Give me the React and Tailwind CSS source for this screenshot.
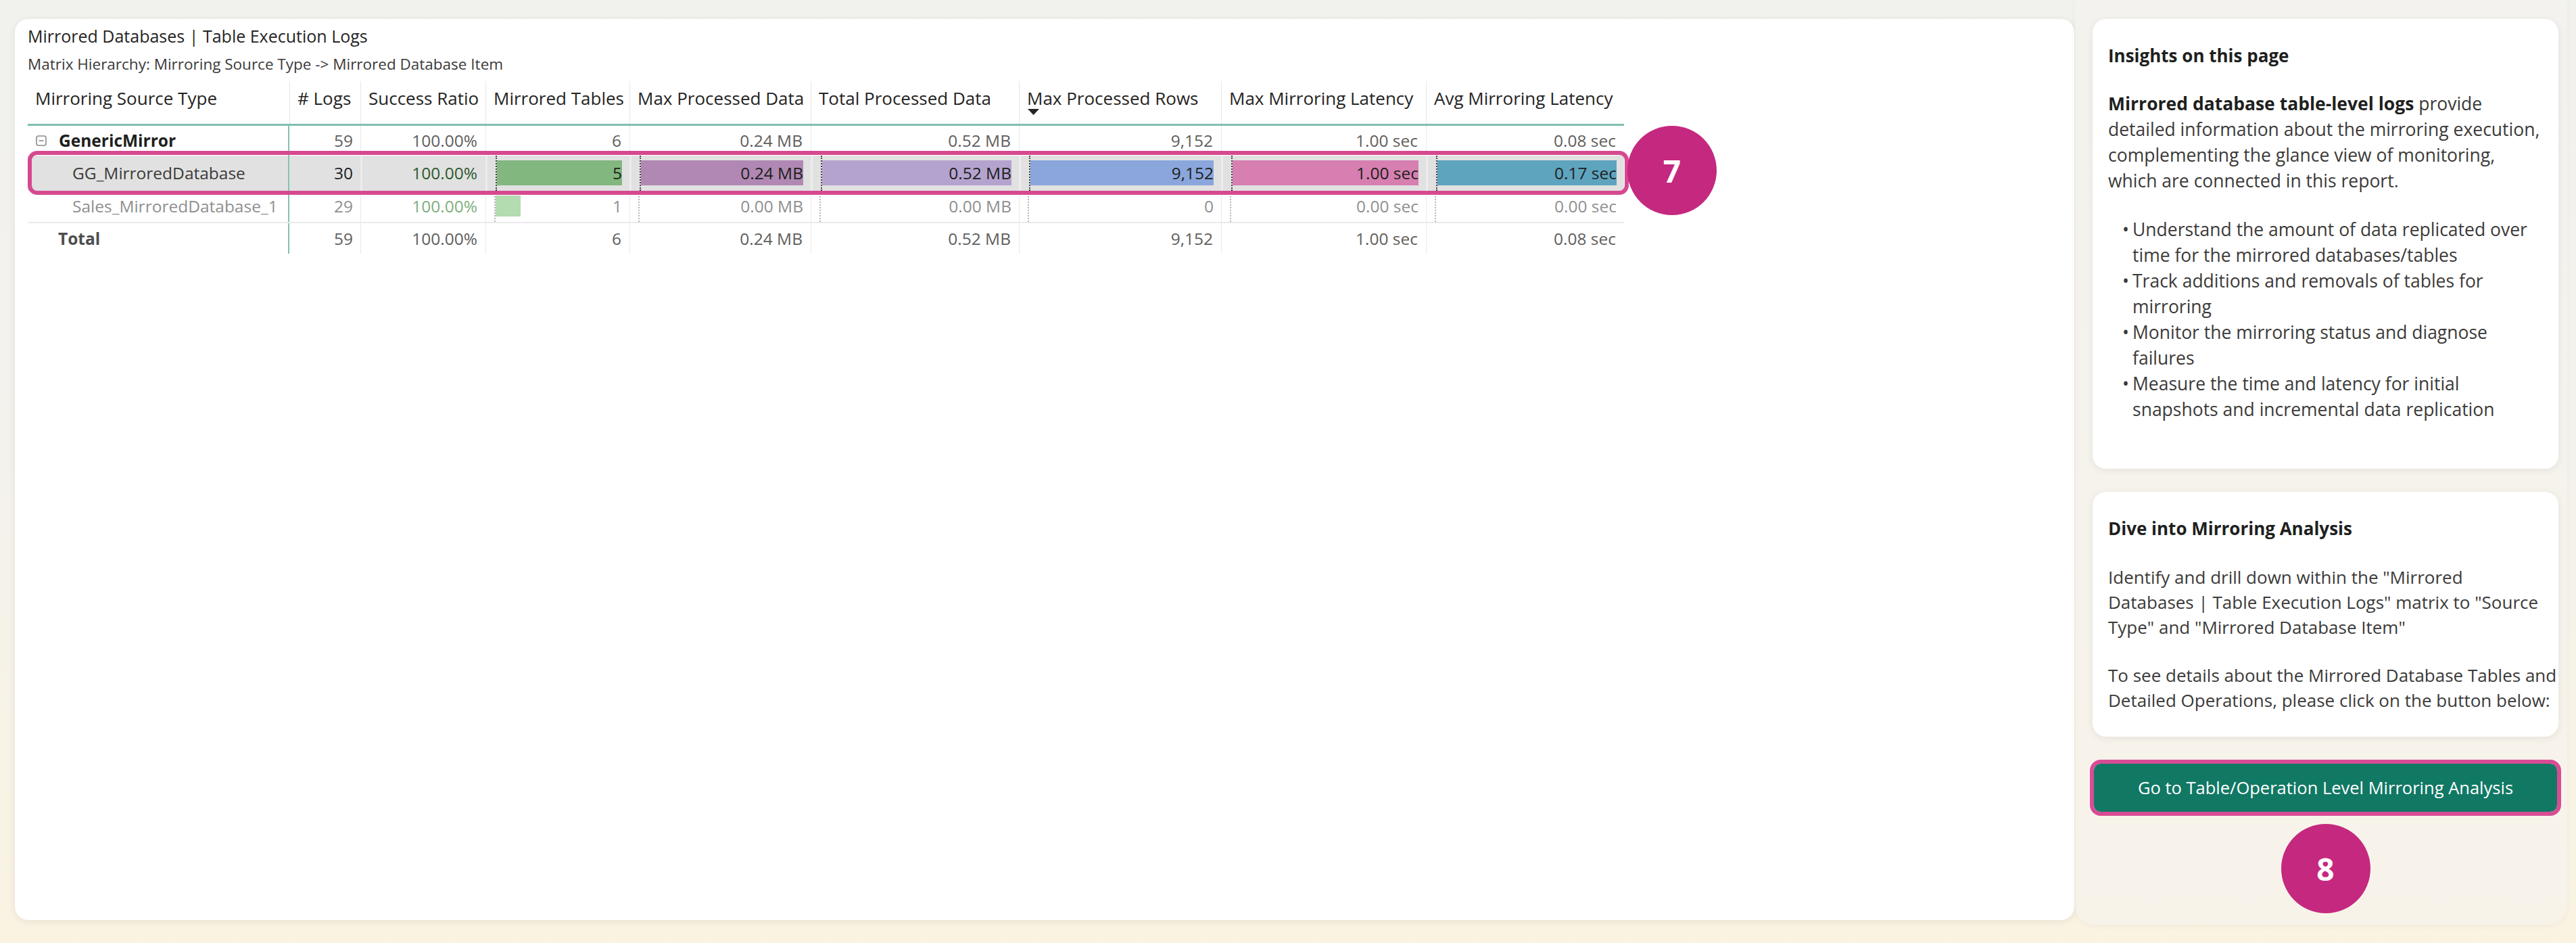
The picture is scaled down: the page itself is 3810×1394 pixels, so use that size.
import React from 'react';

// column template of the matrix: 41px -> 2402px inside the card
const GRID = 'grid grid-cols-[387px_105px_185px_213px_268px_308px_299px_303px_293px]';

const headers = [
  'Mirroring Source Type',
  '# Logs',
  'Success Ratio',
  'Mirrored Tables',
  'Max Processed Data',
  'Total Processed Data',
  'Max Processed Rows',
  'Max Mirroring Latency',
  'Avg Mirroring Latency',
];

const barColors = {
  selected: ['#82b87f', '#b088b3', '#b5a3cf', '#8aa6dc', '#d67fb0', '#5ea4be'],
  dimmed: ['#b3dcb1', '#d6c0d8', '#d8cde6', '#c3d1ee', '#ebbfd7', '#a9cfdd'],
};

const rows = [
  { id: 'generic', kind: 'group', name: 'GenericMirror', logs: '59', ratio: '100.00%', values: ['6', '0.24 MB', '0.52 MB', '9,152', '1.00 sec', '0.08 sec'] },
  { id: 'gg', kind: 'selected', name: 'GG_MirroredDatabase', logs: '30', ratio: '100.00%', values: ['5', '0.24 MB', '0.52 MB', '9,152', '1.00 sec', '0.17 sec'], bars: [100, 100, 100, 100, 100, 100] },
  { id: 'sales', kind: 'dimmed', name: 'Sales_MirroredDatabase_1', logs: '29', ratio: '100.00%', values: ['1', '0.00 MB', '0.00 MB', '0', '0.00 sec', '0.00 sec'], bars: [20, 0, 0, 0, 0, 0] },
  { id: 'total', kind: 'total', name: 'Total', logs: '59', ratio: '100.00%', values: ['6', '0.24 MB', '0.52 MB', '9,152', '1.00 sec', '0.08 sec'] },
];

const rowStyles = {
  group: {
    row: 'h-[44px]',
    name: 'pl-[12px] font-bold text-[#201f1e]',
    value: 'text-[#605e5c]',
    ratio: 'text-[#605e5c]',
    sep: 'border-l border-[#e9e9e9]',
    axis: '',
  },
  selected: {
    row: 'h-[52px] bg-[#e1e1e1]',
    name: 'pl-[66px] text-[#3b3a39]',
    value: 'text-[#201f1e]',
    ratio: 'text-[#2f5a2f]',
    sep: 'border-l-[3px] border-[#ececec]',
    axis: 'border-l-2 border-dotted border-[#444]',
  },
  dimmed: {
    row: 'h-[46px]',
    name: 'pl-[66px] text-[#8f8f8f]',
    value: 'text-[#8f8f8f]',
    ratio: 'text-[#7fae7f]',
    sep: 'border-l border-[#e9e9e9]',
    axis: 'border-l-2 border-dotted border-[#b5b5b5]',
  },
  total: {
    row: 'h-[47px] border-t-2 border-[#ebebeb]',
    name: 'pl-[45px] font-bold text-[#4d4d4d]',
    value: 'text-[#605e5c]',
    ratio: 'text-[#605e5c]',
    sep: 'border-l border-[#e9e9e9]',
    axis: '',
  },
};

const CollapseIcon = () => (
  <svg width="16" height="16" viewBox="0 0 16 16" className="mr-[18px] shrink-0">
    <rect x="1" y="1" width="14" height="14" rx="3" fill="none" stroke="#8a8a8a" strokeWidth="1.6" />
    <line x1="4.5" y1="8" x2="11.5" y2="8" stroke="#8a8a8a" strokeWidth="1.6" />
  </svg>
);

const SimpleCell = ({ text, color, sep }) => (
  <div className={`h-full flex items-center justify-end pr-[12px] ${sep} ${color}`}>{text}</div>
);

const BarCell = ({ text, color, sep, axis, pct, fill }) => (
  <div className={`h-full pl-[12px] pr-[11px] ${sep}`}>
    <div className={`relative h-full flex items-center justify-end ${axis}`}>
      <div className="absolute left-0 top-[7px] bottom-[8px]" style={{ width: `${pct}%`, backgroundColor: fill }} />
      <span className={`relative ${color}`}>{text}</span>
    </div>
  </div>
);

const MatrixRow = ({ row }) => {
  const s = rowStyles[row.kind];
  return (
    <div className={`${GRID} ${s.row}`}>
      <div className={`h-full flex items-center border-r-2 border-[#86c2b4] whitespace-nowrap ${s.name}`}>
        {row.kind === 'group' && <CollapseIcon />}
        {row.name}
      </div>
      <div className={`h-full flex items-center justify-end pr-[11px] ${s.value}`}>{row.logs}</div>
      <SimpleCell text={row.ratio} color={s.ratio} sep={s.sep} />
      {row.values.map((v, i) =>
        row.bars ? (
          <BarCell key={i} text={v} color={s.value} sep={s.sep} axis={s.axis} pct={row.bars[i]} fill={barColors[row.kind][i]} />
        ) : (
          <SimpleCell key={i} text={v} color={s.value} sep={s.sep} />
        )
      )}
    </div>
  );
};

const Matrix = () => (
  <div className="relative mt-[11px] w-[2361px] text-[24.5px] leading-[32px]">
    <div className={`${GRID} h-[66px] border-b-[3px] border-[#80bfb1] text-[26px]`}>
      {headers.map((h, i) => (
        <div
          key={h}
          className={`pt-[9px] whitespace-nowrap text-[#252423] ${i === 0 ? 'pl-[11px]' : 'pl-[11px] border-l border-[#e6e6e6]'}`}
        >
          {h}
          {h === 'Max Processed Rows' && (
            <svg width="17" height="10" viewBox="0 0 17 10" className="block ml-[1px]">
              <polygon points="0,0 17,0 8.5,9" fill="#252423" />
            </svg>
          )}
        </div>
      ))}
    </div>
    {rows.map((r) => (
      <MatrixRow key={r.id} row={r} />
    ))}

    {/* annotation around the selected row */}
    <div className="absolute left-0 top-[103px] w-[2368px] h-[65px] border-[6px] border-[#d6498f] rounded-[14px] pointer-events-none" />
    <div className="absolute left-[2366px] top-[66px] w-[132px] h-[132px] rounded-full bg-[#c5287f] flex items-center justify-center text-white font-bold text-[46px] leading-none">
      7
    </div>
  </div>
);

const bullets = [
  ['Understand the amount of data replicated over', 'time for the mirrored databases/tables'],
  ['Track additions and removals of tables for', 'mirroring'],
  ['Monitor the mirroring status and diagnose', 'failures'],
  ['Measure the time and latency for initial', 'snapshots and incremental data replication'],
];

export default function App() {
  return (
    <div className="w-[3810px] h-[1394px] flex items-start bg-gradient-to-b from-[#f1f1ee] via-[#f4f2ec] to-[#faf3e2] font-['Open_Sans',sans-serif] overflow-hidden">
      {/* main report card */}
      <div className="ml-[22px] mt-[28px] w-[3046px] h-[1332px] rounded-[20px] bg-white shadow-[0_2px_12px_rgba(0,0,0,0.08)] pl-[19px] pt-[9px]">
        <div className="text-[25px] leading-[32px] text-[#252423]">Mirrored Databases | Table Execution Logs</div>
        <div className="mt-[12px] text-[22.5px] leading-[28px] text-[#3b3a39]">
          Matrix Hierarchy: Mirroring Source Type -&gt; Mirrored Database Item
        </div>
        <Matrix />
      </div>

      {/* right side panel */}
      <div className="ml-[1px] w-[728px] h-[1367px] pt-[28px] pl-[26px] pr-[13px] rounded-b-[30px] bg-[#f6f4ee]/60 shadow-[0_2px_10px_rgba(0,0,0,0.04)]">
        <div className="h-[665px] rounded-[20px] bg-white shadow-[0_2px_12px_rgba(0,0,0,0.08)] pl-[23px] pr-[16px] pt-[35px] text-[26.5px] leading-[38px] text-[#3b3a39]">
          <div className="font-bold text-[#201f1e] text-[26px]">Insights on this page</div>
          <p className="mt-[33px] whitespace-nowrap">
            <span className="font-bold text-[#201f1e]">Mirrored database table-level logs</span> provide
            <br />
            detailed information about the mirroring execution,
            <br />
            complementing the glance view of monitoring,
            <br />
            which are connected in this report.
          </p>
          <ul className="mt-[34px] pl-[21px]">
            {bullets.map(([a, b]) => (
              <li key={a} className="flex whitespace-nowrap">
                <span className="w-[15px] shrink-0">•</span>
                <span>
                  {a}
                  <br />
                  {b}
                </span>
              </li>
            ))}
          </ul>
        </div>

        <div className="mt-[34px] h-[362px] rounded-[20px] bg-white shadow-[0_2px_12px_rgba(0,0,0,0.08)] pl-[23px] pr-[16px] pt-[35px] text-[26px] leading-[37px] text-[#3b3a39]">
          <div className="font-bold text-[#201f1e] leading-[38px]">Dive into Mirroring Analysis</div>
          <p className="mt-[35px] whitespace-nowrap">
            Identify and drill down within the "Mirrored
            <br />
            Databases | Table Execution Logs" matrix to "Source
            <br />
            Type" and "Mirrored Database Item"
          </p>
          <p className="mt-[34px] whitespace-nowrap">
            To see details about the Mirrored Database Tables and
            <br />
            Detailed Operations, please click on the button below:
          </p>
        </div>

        <div className="mt-[34px] -mx-[4px] h-[83px] rounded-[16px] border-[6px] border-[#d84c95]">
          <button className="w-full h-full rounded-[10px] bg-[#117864] text-white text-[25.5px] flex items-center justify-center">
            Go to Table/Operation Level Mirroring Analysis
          </button>
        </div>

        <div className="mt-[12px] mx-auto w-[132px] h-[132px] rounded-full bg-[#c5287f] flex items-center justify-center text-white font-bold text-[46px] leading-none">
          8
        </div>
      </div>
    </div>
  );
}
